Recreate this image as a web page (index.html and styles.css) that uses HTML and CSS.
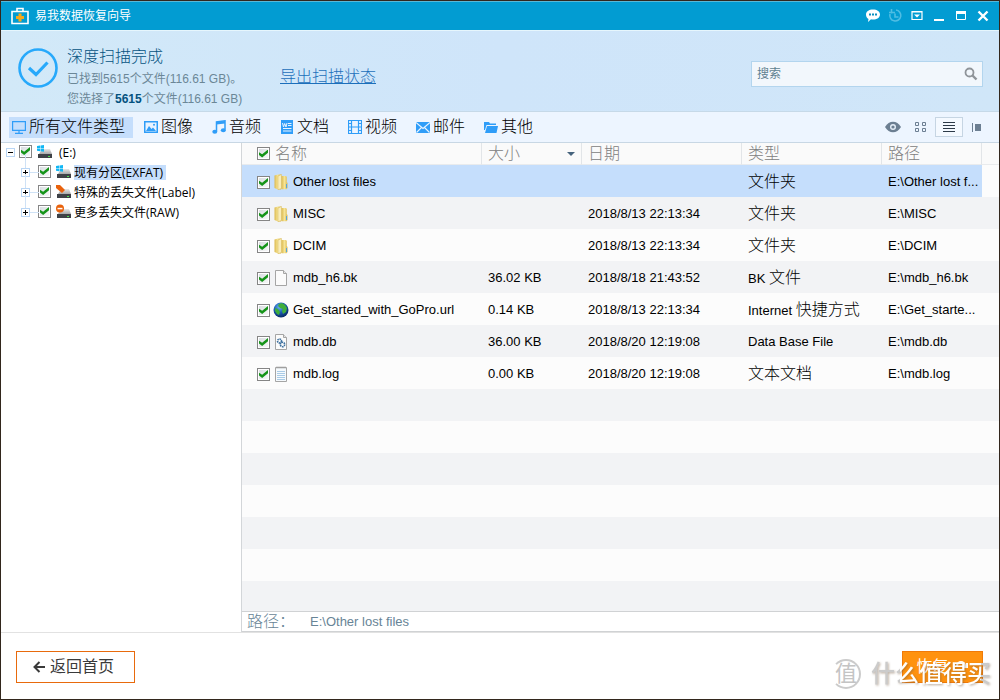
FILE: index.html
```html
<!DOCTYPE html>
<html lang="zh-CN">
<head>
<meta charset="utf-8">
<title>易我数据恢复向导</title>
<link rel="stylesheet" href="styles.css">
</head>
<body>
<svg class="defs" aria-hidden="true">
  <defs>
    <linearGradient id="gold" x1="0" x2="1"><stop offset="0" stop-color="#dcb94e"/><stop offset=".5" stop-color="#f6e495"/><stop offset="1" stop-color="#d9b850"/></linearGradient>
    <radialGradient id="globe" cx=".4" cy=".3" r=".7"><stop offset="0" stop-color="#6fb4f0"/><stop offset=".5" stop-color="#1d5fb8"/><stop offset="1" stop-color="#082a66"/></radialGradient>
    <linearGradient id="metal" x1="0" x2="0" y1="0" y2="1"><stop offset="0" stop-color="#e6e6e6"/><stop offset="1" stop-color="#a8a8a8"/></linearGradient>
    <symbol id="drive" viewBox="0 0 16 16"><path d="M5 5h8l2 5H2z" fill="url(#metal)"/><path d="M1 10h14v4H1z" fill="#3f4247"/><path d="M11 12h2v1h-2z" fill="#4be04b"/></symbol>
    <symbol id="windows" viewBox="0 0 16 16"><path d="M0 2l3-.5V4H0zM3.500 1.400L7 1v3H3.500zM0 4.600h3V7.200L0 6.700zM3.500 4.600H7v3.200l-3.500-.5z" fill="#12b7f5"/></symbol>
    <symbol id="folder" viewBox="0 0 14 16"><path d="M.5 1.500L4 .5h3v15H4l-3.500-1.500z" fill="url(#gold)"/><path d="M4 2l3.500-1.500v14L4 15.700z" fill="#f9edb9" stroke="#d6b754" stroke-width=".5"/><path d="M7.500 2H12l.8 1v5l.7 1v5l-1 1.200h-5z" fill="url(#gold)"/><path d="M12 10h1v4h-1z" fill="#5aa5d8"/></symbol>
    <symbol id="page" viewBox="0 0 14 16"><path d="M1.500.5h8l3 3v12h-11z" fill="#fbfbfb" stroke="#a5a5a5"/><path d="M9.500.5v3h3" fill="#e5e5e5" stroke="#a5a5a5"/></symbol>
  </defs>
</svg>
<div class="window">
  <header class="titlebar">
    <svg class="app-icon" viewBox="0 0 20 18"><path d="M7 4V1.500h6V4M2 4.500h16v12H2z" fill="none" stroke="#fff" stroke-width="1.600"/><path d="M8.500 6.500h3v2.500h2.500v3h-2.500v2.500h-3V12H6V9h2.500z" fill="#f7a81b"/></svg>
    <h1 class="app-title">易我数据恢复向导</h1>
    <div class="window-buttons">
      <button class="win-btn" aria-label="反馈"><svg viewBox="0 0 14 14"><path d="M7 .5c4 0 7 2 7 5s-3 5-7 5c-1 0-1.500 0-2-.2L2 13l.5-3C1 9 0 7.500 0 5.500c0-3 3-5 7-5z" fill="#fff"/><path d="M3 4.500h2v2H3zM6 4.500h2v2H6zM9 4.500h2v2H9z" fill="#0a8fc0"/></svg></button>
      <button class="win-btn" aria-label="历史"><svg viewBox="0 0 14 14"><path d="M2 5a5.500 5.500 0 1 0 6-4M3.500 0v4.500M1 3.500h6M7 4.500V8h3.500" fill="none" stroke="#4fbde3" stroke-width="1.600"/></svg></button>
      <button class="win-btn" aria-label="菜单"><svg viewBox="0 0 14 14"><path d="M2 2.500h10v8H2zM2 3h10" fill="none" stroke="#fff" stroke-width="1.200"/><path d="M4 5.500h6l-3 3z" fill="#fff"/></svg></button>
      <button class="win-btn" aria-label="最小化"><svg viewBox="0 0 14 14"><path d="M2 10h10v2H2z" fill="#fff"/></svg></button>
      <button class="win-btn" aria-label="最大化"><svg viewBox="0 0 14 14"><path d="M2.500 2.500h9v8h-9z" fill="none" stroke="#fff"/><path d="M2 2h10v3H2z" fill="#fff"/></svg></button>
      <button class="win-btn" aria-label="关闭"><svg viewBox="0 0 14 14"><path d="M2.500 2.500l9 9M11.500 2.500l-9 9" stroke="#fff" stroke-width="2.400"/></svg></button>
    </div>
  </header>

  <section class="summary">
    <svg class="done-icon" viewBox="0 0 40 40"><circle cx="20" cy="20" r="18.500" fill="none" stroke="#27a9fb" stroke-width="2.600"/><path d="M11 20l7 6.500L29.500 14.500" fill="none" stroke="#27a9fb" stroke-width="3.200"/></svg>
    <div class="summary-text">
      <h2 class="summary-title">深度扫描完成</h2>
      <p class="summary-line">已找到5615个文件(116.61 GB)。</p>
      <p class="summary-line">您选择了<strong>5615</strong>个文件(116.61 GB)</p>
    </div>
    <a class="export-link" href="#">导出扫描状态</a>
    <form class="search">
      <input class="search-input" type="search" placeholder="搜索" aria-label="搜索">
      <button class="search-btn" type="button" aria-label="搜索"><svg viewBox="0 0 14 14"><circle cx="5.500" cy="5.500" r="4" fill="none" stroke="#8f9499" stroke-width="1.800"/><path d="M8.500 8.500l4 4" stroke="#8f9499" stroke-width="2.400"/></svg></button>
    </form>
  </section>

  <nav class="toolbar">
    <div class="filters">
      <button class="filter active"><svg viewBox="0 0 14 14"><path d="M.6 1.600h12.800v8.800H.6zM7 10v3M3 13.400h8" fill="none" stroke="#2f9df8" stroke-width="1.200"/></svg>所有文件类型</button>
      <button class="filter"><svg viewBox="0 0 14 14"><path d="M0 1h14v12H0z" fill="#2f9df8"/><path d="M1.500 2.500h11v9h-11z" fill="#e9f3ff"/><path d="M2 11l3-5 2.500 3L9 7.500l3 3.500z" fill="#2f9df8"/><circle cx="10" cy="4.800" r="1" fill="#2f9df8"/></svg>图像</button>
      <button class="filter"><svg viewBox="0 0 14 14"><path d="M4.500 11.500V2L13 .8v9" fill="none" stroke="#2f9df8" stroke-width="1.500"/><path d="M4.500 2L13 1v2.500L4.500 4.500z" fill="#2f9df8"/><ellipse cx="2.800" cy="11.800" rx="2.500" ry="2" fill="#2f9df8"/><ellipse cx="11.300" cy="10.200" rx="2.500" ry="2" fill="#2f9df8"/></svg>音频</button>
      <button class="filter"><svg viewBox="0 0 14 14"><path d="M1 0h12v14H1z" fill="#2f9df8"/><path d="M2.500 3l1 4 1.200-3.500L6 7l1-4M8 3.500h3.500M8 5.500h3.500M3 8.500h8.500M3 11h8.500" fill="none" stroke="#e9f3ff"/></svg>文档</button>
      <button class="filter"><svg viewBox="0 0 14 14"><path d="M.5.5h13v13H.5zM3.500 0v14M10.500 0v14M3.500 7h7M0 3.500h3M0 7h3M0 10.500h3M11 3.500h3M11 7h3M11 10.500h3" fill="none" stroke="#2f9df8" stroke-width="1.200"/></svg>视频</button>
      <button class="filter"><svg viewBox="0 0 14 14"><path d="M0 2h14v11H0z" fill="#2f9df8"/><path d="M0 2.500l7 6 7-6M.5 12.500l5-5M13.500 12.500l-5-5" fill="none" stroke="#e9f3ff" stroke-width="1.100"/></svg>邮件</button>
      <button class="filter"><svg viewBox="0 0 14 14"><path d="M0 2h5l1 1.500h6V5H2.500L1 10H0z" fill="#2f9df8"/><path d="M3 6h11l-1.500 7H1z" fill="#2f9df8"/></svg>其他</button>
    </div>
    <div class="views">
      <button class="view" aria-label="预览"><svg viewBox="0 0 16 16"><path d="M0 8c4-7 12-7 16 0-4 7-12 7-16 0z" fill="#6c7f92"/><circle cx="8" cy="8" r="3" fill="#e4edf7"/><circle cx="8" cy="8" r="1.600" fill="#6c7f92"/></svg></button>
      <button class="view" aria-label="缩略图"><svg viewBox="0 0 16 16"><path d="M2.500 3.500h3v3h-3zM9.500 3.500h3v3h-3zM2.500 9.500h3v3h-3zM9.500 9.500h3v3h-3z" fill="none" stroke="#6c7f92"/></svg></button>
      <button class="view current" aria-label="列表"><svg viewBox="0 0 16 16"><path d="M2 3.500h12M2 6.500h12M2 9.500h12M2 12.500h12" stroke="#2c3a48"/></svg></button>
      <button class="view" aria-label="详情"><svg viewBox="0 0 16 16"><path d="M3.500 4v9" stroke="#6c7f92"/><path d="M6 5h6v7H6z" fill="#6c7f92"/></svg></button>
    </div>
  </nav>

  <main class="content">
    <aside class="sidebar">
      <ul class="tree">
        <li>
          <div class="node"><button class="toggle" aria-label="折叠"></button><input type="checkbox" class="check" id="t0" checked><svg class="node-icon" viewBox="0 0 16 16"><use href="#drive"/><use href="#windows"/></svg><label class="node-label root-label" for="t0">(E:)</label></div>
          <ul class="branch">
            <li class="node"><button class="toggle closed" aria-label="展开"></button><input type="checkbox" class="check" id="t1" checked><svg class="node-icon" viewBox="0 0 16 16"><use href="#drive"/><use href="#windows"/></svg><label class="node-label selected" for="t1">现有分区(EXFAT)</label></li>
            <li class="node"><button class="toggle closed" aria-label="展开"></button><input type="checkbox" class="check" id="t2" checked><svg class="node-icon" viewBox="0 0 16 16"><use href="#drive"/><path d="M0 1h4l5 5-3 3-6-5z" fill="#e9620c"/></svg><label class="node-label" for="t2">特殊的丢失文件(Label)</label></li>
            <li class="node"><button class="toggle closed" aria-label="展开"></button><input type="checkbox" class="check" id="t3" checked><svg class="node-icon" viewBox="0 0 16 16"><use href="#drive"/><circle cx="4" cy="4.500" r="4" fill="#e9620c"/><path d="M1.500 3.800h5v1.500h-5z" fill="#fff"/></svg><label class="node-label" for="t3">更多丢失文件(RAW)</label></li>
          </ul>
        </li>
      </ul>
    </aside>

    <section class="files">
      <div class="file-list">
        <table class="file-table">
          <colgroup><col><col class="c-size"><col class="c-date"><col class="c-type"><col class="c-path"><col class="c-rest"></colgroup>
          <thead>
            <tr><th><div class="name head-name"><input type="checkbox" class="check" id="all" checked><label for="all">名称</label></div></th><th><div class="sorted">大小<span class="arrow"></span></div></th><th>日期</th><th>类型</th><th>路径</th><th></th></tr>
          </thead>
          <tbody>
            <tr class="picked"><td><div class="name"><input type="checkbox" class="check" id="f1" checked><svg class="file-icon" viewBox="0 0 14 16"><use href="#folder"/></svg><label for="f1">Other lost files</label></div></td><td></td><td></td><td><span class="han">文件夹</span></td><td>E:\Other lost f...</td><td></td></tr>
            <tr><td><div class="name"><input type="checkbox" class="check" id="f2" checked><svg class="file-icon" viewBox="0 0 14 16"><use href="#folder"/></svg><label for="f2">MISC</label></div></td><td></td><td>2018/8/13 22:13:34</td><td><span class="han">文件夹</span></td><td>E:\MISC</td><td></td></tr>
            <tr><td><div class="name"><input type="checkbox" class="check" id="f3" checked><svg class="file-icon" viewBox="0 0 14 16"><use href="#folder"/></svg><label for="f3">DCIM</label></div></td><td></td><td>2018/8/13 22:13:34</td><td><span class="han">文件夹</span></td><td>E:\DCIM</td><td></td></tr>
            <tr><td><div class="name"><input type="checkbox" class="check" id="f4" checked><svg class="file-icon" viewBox="0 0 14 16"><use href="#page"/></svg><label for="f4">mdb_h6.bk</label></div></td><td>36.02 KB</td><td>2018/8/18 21:43:52</td><td>BK <span class="han">文件</span></td><td>E:\mdb_h6.bk</td><td></td></tr>
            <tr><td><div class="name"><input type="checkbox" class="check" id="f5" checked><svg class="file-icon" viewBox="0 0 14 16"><circle cx="7" cy="8" r="7.500" fill="url(#globe)"/><path d="M5 2c2-1 4-1 6 1l2 3-1 4-3 2-1-3 1-2-3-1-2-2zM1 6l3 1 2 3-1 3-2-1-2-3z" fill="#3fae3b"/></svg><label for="f5">Get_started_with_GoPro.url</label></div></td><td>0.14 KB</td><td>2018/8/13 22:13:34</td><td>Internet <span class="han">快捷方式</span></td><td>E:\Get_starte...</td><td></td></tr>
            <tr><td><div class="name"><input type="checkbox" class="check" id="f6" checked><svg class="file-icon" viewBox="0 0 14 16"><use href="#page"/><circle cx="5.500" cy="7" r="2" fill="none" stroke="#3c6f9e" stroke-width="1.600" stroke-dasharray="1.500 .6"/><circle cx="8.500" cy="10.500" r="2.200" fill="none" stroke="#3c6f9e" stroke-width="1.600" stroke-dasharray="1.500 .6"/></svg><label for="f6">mdb.db</label></div></td><td>36.00 KB</td><td>2018/8/20 12:19:08</td><td>Data Base File</td><td>E:\mdb.db</td><td></td></tr>
            <tr><td><div class="name"><input type="checkbox" class="check" id="f7" checked><svg class="file-icon" viewBox="0 0 14 16"><path d="M1.500 1.500h11v14h-11z" fill="#f6fafd" stroke="#a5a5a5"/><path d="M3 5.500h8M3 7.500h8M3 9.500h8M3 11.500h8M3 13.500h8" stroke="#a9cbe6"/><path d="M3 .500v2M5 .500v2M7 .500v2M9 .500v2M11 .500v2" stroke="#999"/></svg><label for="f7">mdb.log</label></div></td><td>0.00 KB</td><td>2018/8/20 12:19:08</td><td><span class="han">文本文档</span></td><td>E:\mdb.log</td><td></td></tr>
          </tbody>
        </table>
      </div>
      <div class="pathbar"><span class="han">路径：</span><span>E:\Other lost files</span></div>
    </section>
  </main>

  <footer class="footer">
    <button class="back-btn"><svg viewBox="0 0 12 12"><path d="M12 6H2M6.500 1L1.500 6l5 5" fill="none" stroke="#3a3a3a" stroke-width="2"/></svg>返回首页</button>
    <button class="recover-btn">恢复<svg viewBox="0 0 14 14"><path d="M2 6a4 4 0 0 1 8 0M12 3v4H8" fill="none" stroke="#fff" stroke-width="2"/></svg></button>
    <div class="watermark"><span class="seal">值</span><span class="brand">什么值得买</span></div>
  </footer>
</div>
</body>
</html>
```
FILE: styles.css
```css
* { box-sizing: border-box; }

body {
  margin: 0;
  font: 13px/20px "Liberation Sans", "Noto Sans CJK SC", sans-serif;
  color: #000;
}

h1, h2, p, ul { margin: 0; padding: 0; font-weight: 400; }
ul { list-style: none; }
svg { display: block; flex: none; }
button { border: 0; padding: 0; background: none; font: inherit; color: inherit; }

.defs { position: absolute; width: 0; height: 0; }
.han, .filter, .summary-title, .export-link, th { font-size: 16px; font-weight: 300; }

.window {
  position: relative;
  display: flex;
  flex-direction: column;
  height: 100vh;
  border: 1px solid #32261c;
  background: #fff;
}

/* title bar */
.titlebar {
  display: flex;
  align-items: center;
  height: 30px;
  padding: 0 9px;
  background: #029cd2;
  border-top: 1px solid #58b8d8;
  border-bottom: 1px solid #e6f6fd;
  color: #fff;
}
.app-icon { width: 20px; height: 18px; margin-right: 5px; }
.app-title { font-size: 12px; line-height: 20px; }
.window-buttons { display: flex; gap: 8px; margin-left: auto; }
.win-btn svg { width: 14px; height: 14px; }

/* scan summary */
.summary {
  display: flex;
  align-items: flex-start;
  height: 81px;
  padding: 15px 16px 0 17px;
  background: linear-gradient(90deg, #d2e9f8, #cfe5fa 50%, #d0e6f8);
  border-bottom: 1px solid #c6d9e8;
}
.done-icon { width: 40px; height: 40px; margin-top: 2px; }
.summary-text { width: 222px; padding-left: 9px; color: #6b8797; }
.summary-title { padding-bottom: 1px; line-height: 22px; color: #04527f; }
.summary-line { font-size: 12px; line-height: 20px; }
.summary-line strong { color: #04527f; }
.export-link { margin-top: 20px; line-height: 22px; color: #1c6fbb; }
.search {
  display: flex;
  align-items: center;
  width: 232px;
  height: 26px;
  margin: 15px 0 0 auto;
  padding: 0 4px 0 5px;
  background: #f2f7fc;
  border: 1px solid #b3d5ee;
}
.search-input {
  flex: 1;
  min-width: 0;
  border: 0;
  padding: 0;
  background: none;
  font: inherit;
  font-size: 12px;
  outline: 0;
}
.search-input::placeholder { color: #5f7f90; }
.search-btn svg { width: 14px; height: 14px; }

/* filters and view modes */
.toolbar {
  display: flex;
  justify-content: space-between;
  align-items: center;
  height: 31px;
  padding: 0 8px;
  background: #edf5ff;
  border-bottom: 1px solid #c8d7e4;
}
.filters { display: flex; gap: 8px; }
.filter {
  display: flex;
  align-items: center;
  gap: 3px;
  height: 21px;
  padding: 0 8px 0 3px;
  line-height: 20px;
}
.filter svg { width: 14px; height: 14px; }
.filter.active { background: #c5defc; }
.views { display: flex; }
.view {
  display: grid;
  place-items: center;
  width: 28px;
  height: 20px;
}
.view svg { width: 16px; height: 16px; }
.view.current { border: 1px solid #c6d5e3; background: #f4f9ff; }

/* main area */
.content { flex: 1; min-height: 0; display: flex; }
.sidebar { width: 241px; border-right: 1px solid #d3d6d9; }

.check {
  appearance: none;
  flex: none;
  display: grid;
  place-items: center;
  width: 13px;
  height: 13px;
  margin: 0;
  border: 1px solid #858585;
  background: linear-gradient(135deg, #d6dade, #fafafa);
  box-shadow: inset 0 0 0 1px #fff;
}
.check:checked::after {
  content: "";
  width: 9px;
  height: 8px;
  background: #159418;
  clip-path: polygon(0 35%, 35% 60%, 100% 0, 100% 40%, 35% 100%, 0 70%);
}

.node {
  position: relative;
  display: flex;
  align-items: center;
  height: 20px;
  padding: 0 0 2px 5px;
  font: 12px/15px "Open Sans", "Noto Sans CJK SC", sans-serif;
}
.node .check { margin: 0 5px 2px 4px; }
.toggle {
  position: relative;
  width: 9px;
  height: 9px;
  border: 1px solid #b9d6f5;
  background: linear-gradient(#000, #000) center / 5px 1px no-repeat #fff;
}
.toggle.closed {
  background:
    linear-gradient(#000, #000) center / 5px 1px no-repeat,
    linear-gradient(#000, #000) center / 1px 5px no-repeat #fff;
}
.node-icon { width: 16px; height: 16px; margin-right: 2px; }
.node-label { white-space: nowrap; }
.root-label { padding-left: 4px; }
.node-label.selected { padding-right: 3px; background: #c5defc; }
.branch .node { padding-left: 20px; }
.branch .node .check { margin-left: 8px; }
.branch .node::before {
  content: "";
  position: absolute;
  left: 24px;
  top: -9px;
  width: 13px;
  height: 18px;
  border: solid #cfe2f6;
  border-width: 0 0 1px 1px;
}

/* file list */
.files { flex: 1; min-width: 0; display: flex; flex-direction: column; }
.file-list {
  flex: 1;
  min-height: 0;
  overflow: hidden;
  background: repeating-linear-gradient(#fcfcfc 0 32px, #f2f3f5 32px 64px) 0 22px no-repeat;
}
.file-table {
  width: 100%;
  table-layout: fixed;
  border-collapse: separate;
  border-spacing: 0;
}
.c-size { width: 100px; }
.c-date { width: 160px; }
.c-type { width: 140px; }
.c-path { width: 100px; }
.c-rest { width: 17px; }
th {
  height: 22px;
  padding: 0 6px;
  background: #fafafa;
  border-right: 1px solid #e2e5e8;
  border-bottom: 1px solid #e9ebed;
  line-height: 20px;
  text-align: left;
  color: #808080;
}
th:last-child { border-right: 0; }
td {
  height: 32px;
  padding: 2px 0 0 6px;
  line-height: 20px;
  white-space: nowrap;
}
th:first-child, td:first-child { padding-left: 15px; }
.picked td:not(:last-child) { background: #c5defc; }
.name { display: flex; align-items: center; }
.head-name { gap: 5px; }
.file-icon { width: 14px; height: 16px; margin: 0 5px 0 4px; overflow: visible; }
.sorted { display: flex; justify-content: space-between; align-items: center; }
.arrow { border: 4px solid transparent; border-top-color: #46637d; border-bottom: 0; }

.pathbar {
  display: flex;
  align-items: center;
  gap: 15px;
  height: 21px;
  padding-left: 5px;
  border-top: 1px solid #d0d2d4;
  border-bottom: 1px solid #d0d2d4;
  color: #688496;
}

/* footer */
.footer {
  display: flex;
  justify-content: space-between;
  height: 67px;
  padding: 18px 16px 0 15px;
  border-top: 1px solid #e2e2e2;
}
.back-btn, .recover-btn {
  display: flex;
  align-items: center;
  justify-content: center;
  height: 32px;
  font-size: 16px;
}
.back-btn {
  gap: 5px;
  width: 119px;
  padding-right: 4px;
  border: 1px solid #e86a0c;
  color: #3a3a3a;
}
.back-btn svg { width: 12px; height: 12px; }
.recover-btn {
  gap: 6px;
  width: 81px;
  border: 1px solid #f07a08;
  background: #ff920f;
  color: #fff;
}
.recover-btn svg { width: 14px; height: 14px; }

/* site mark laid over the bottom right corner */
.watermark {
  position: absolute;
  right: 8px;
  bottom: 9px;
  display: flex;
  align-items: center;
  gap: 10px;
  color: #c4c4c4;
  pointer-events: none;
}
.seal {
  display: grid;
  place-items: center;
  width: 30px;
  height: 30px;
  border: 2px solid #cbcbcb;
  border-left-color: transparent;
  border-radius: 50%;
  font-size: 22px;
}
.brand {
  font-size: 24px;
  line-height: 32px;
  font-weight: 500;
  background: linear-gradient(90deg, #cbcbcb 29px, #fff 29px 110px, #cbcbcb 110px);
  background-clip: text;
  color: transparent;
  filter: drop-shadow(1px 1px 1px rgba(120, 90, 60, .5));
}
```
